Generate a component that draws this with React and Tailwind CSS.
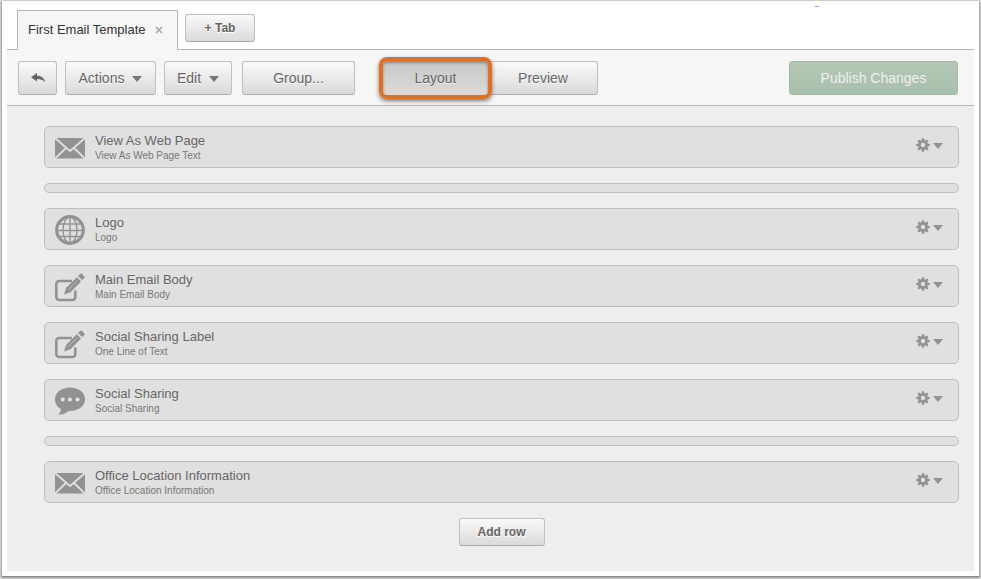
import React from "react";

const rows = [
  { icon: "mail", title: "View As Web Page", detail: "View As Web Page Text" },
  { spacer: true },
  { icon: "globe", title: "Logo", detail: "Logo" },
  { icon: "edit", title: "Main Email Body", detail: "Main Email Body" },
  { icon: "edit", title: "Social Sharing Label", detail: "One Line of Text" },
  { icon: "chat", title: "Social Sharing", detail: "Social Sharing" },
  { spacer: true },
  { icon: "mail", title: "Office Location Information", detail: "Office Location Information" },
];

const raised =
  "rounded-[3px] border border-[#bfbfbf] border-b-[#acacac] bg-linear-to-b from-[#fafafa] to-[#dadada] text-[#666] text-shadow-[0_1px_0_#fff]";

function Caret({ className }) {
  return (
    <svg className={className} viewBox="0 0 10 6" width="10" height="6" fill="currentColor" aria-hidden="true">
      <path d="M0 0h10L5 6z" />
    </svg>
  );
}

function RowIcon({ name }) {
  return (
    <svg className="size-[30px] shrink-0 text-[#929292]" viewBox="0 0 30 30" fill="currentColor" aria-hidden="true">
      {name === "mail" && (
        <>
          <path d="M0 5h30v20.500H0z" />
          <path d="M0 5l15 13L30 5M0 25.500l11-10.500M30 25.500L19 15" fill="none" stroke="#e0e0e0" strokeWidth="1.800" />
        </>
      )}
      {name === "globe" && (
        <g fill="none" stroke="currentColor">
          <circle cx="15" cy="15" r="13.300" strokeWidth="3.200" />
          <path d="M15 2v26M2 15.500h26M4.500 9h21M4.500 21.500h21" strokeWidth="1.400" />
          <ellipse cx="15" cy="15" rx="7" ry="13" strokeWidth="1.400" />
        </g>
      )}
      {name === "edit" && (
        <>
          <path
            d="M17 9H4.300a3 3 0 0 0-3 3v13a3 3 0 0 0 3 3h13a3 3 0 0 0 3-3v-6.500"
            fill="none"
            stroke="currentColor"
            strokeWidth="2.600"
          />
          <path d="M9 22.500l2.200-6.800L21.800 5.200l4.300 4.300L15.500 20.200z" />
          <path d="M23 4L25.400 1.800q.8-.6 1.400 0l2.600 2.600q.6.700 0 1.400L27.300 8.200z" />
          <path d="M13.500 17.300L22 8.900" stroke="#d0d0d0" strokeWidth=".7" />
        </>
      )}
      {name === "chat" && (
        <>
          <path d="M15 1.500c8.300 0 15 5 15 11.700S23.300 25 15 25h-1.500C11 27.500 7.500 28.700 3 28.600c1.800-1.300 2.800-3 3-5.500C2.300 21 0 17.500 0 13.200 0 6.500 6.700 1.500 15 1.500z" />
          <g fill="#e4e4e4">
            <circle cx="7.700" cy="13.500" r="2" />
            <circle cx="15" cy="13.500" r="2" />
            <circle cx="22.500" cy="13.500" r="2" />
          </g>
        </>
      )}
    </svg>
  );
}

function Gear() {
  return (
    <svg viewBox="-7 -7 14 14" width="14" height="14" fill="currentColor" aria-hidden="true">
      <path
        fillRule="evenodd"
        d="M-4.900 0a4.900 4.900 0 1 0 9.800 0a4.900 4.900 0 1 0-9.800 0zM-2.200 0a2.200 2.200 0 1 1 4.400 0a2.200 2.200 0 1 1-4.400 0z"
      />
      {[0, 45, 90, 135, 180, 225, 270, 315].map((angle) => (
        <path key={angle} d="M-1.400-4.300L-1.100-6.800H1.100L1.400-4.300z" transform={`rotate(${angle})`} />
      ))}
    </svg>
  );
}

function Row({ icon, title, detail }) {
  return (
    <li className="flex h-[42px] items-start rounded-[5px] border border-[#bfbfbf] bg-[#e0e0e0] pt-1.5 pr-[15px] pl-2.5">
      <RowIcon name={icon} />
      <div className="ml-2.5 min-w-0 flex-1 text-[#666]">
        <div className="truncate text-[13px] leading-4">{title}</div>
        <div className="truncate text-[10px] leading-[14px] text-[#777]">{detail}</div>
      </div>
      <button type="button" aria-label={`${title} options`} className="mt-[5px] flex items-center gap-[3px] text-[#929292]">
        <Gear />
        <Caret className="mt-0.5" />
      </button>
    </li>
  );
}

export default function App() {
  return (
    <div className="flex min-h-screen bg-[#ededed] px-0.5 pt-px pb-[3px] font-['Liberation_Sans',Arial,sans-serif]">
      <div className="relative flex flex-1 flex-col bg-white px-[5px] pt-[9px] pb-[5px] shadow-[0_1px_2px_1px_#888]">
        <span className="absolute top-[5px] right-[160px] h-px w-1 bg-[#8c96f0]" />
        <header className="flex items-start border-b border-[#b5b5b5] pl-2.5">
          <div className="-mb-px flex h-10 w-[161px] items-center justify-between border border-b-0 border-[#b5b5b5] bg-[#f6f6f6] pr-3.5 pb-0.5 pl-2.5 text-[13px] text-[#333]">
            <span>First Email Template</span>
            <button type="button" aria-label="Close tab" className="text-[#aaa]">
              <svg width="8" height="8" viewBox="0 0 8 8" stroke="currentColor" strokeWidth="1.600" aria-hidden="true">
                <path d="M1 1l6 6M7 1L1 7" />
              </svg>
            </button>
          </div>
          <button type="button" className={`${raised} mt-1 ml-[7px] h-7 w-[70px] text-xs font-bold`}>
            + Tab
          </button>
        </header>

        <div className="flex h-14 items-center border-b border-[#b5b5b5] bg-[#f6f6f6] pr-4 pl-[11px] text-sm">
          <button type="button" aria-label="Back" className={`${raised} flex h-[34px] w-[39px] items-center justify-center`}>
            <svg width="14" height="10" viewBox="0 0 14 10" fill="currentColor" aria-hidden="true">
              <path d="M0 4.200L6 0v2.700c4.500 0 7.300 2.300 8 6.300C12 6.700 9.500 5.900 6 5.900v2.600z" />
            </svg>
          </button>
          <button type="button" className={`${raised} ml-2 flex h-[34px] w-[91px] items-center justify-center gap-2`}>
            Actions
            <Caret className="mt-0.5 text-[#777]" />
          </button>
          <button type="button" className={`${raised} ml-2 flex h-[34px] w-[68px] items-center justify-center gap-2`}>
            Edit
            <Caret className="mt-0.5 text-[#777]" />
          </button>
          <button type="button" className={`${raised} ml-2.5 h-[34px] w-[113px]`}>
            Group...
          </button>
          <div className="ml-6 flex items-center">
            <button
              type="button"
              aria-pressed="true"
              className="relative z-10 h-[42px] w-[113px] rounded-[8px] border-4 border-[#e36f1e] bg-linear-to-b from-[#c9c9c9] to-[#dadada] text-[#666] shadow-[0_2px_4px_#777,inset_0_2px_3px_#888] text-shadow-[0_1px_0_#eee]"
            >
              Layout
            </button>
            <button type="button" aria-pressed="false" className={`${raised} -ml-1 h-[34px] w-[110px]`}>
              Preview
            </button>
          </div>
          <button
            type="button"
            disabled
            className="ml-auto h-[34px] w-[169px] rounded-[3px] border border-[#a4b8a6] bg-linear-to-b from-[#b4c6b5] to-[#a8c0ab] text-[#f0f0f0]"
          >
            Publish Changes
          </button>
        </div>

        <main className="flex flex-1 flex-col items-center bg-[#eee] pt-5 pr-[15px] pb-5 pl-[37px]">
          <ul className="flex w-full flex-col gap-[15px]">
            {rows.map((row, index) =>
              row.spacer ? (
                <li key={index} className="h-2.5 rounded-[5px] border border-[#bfbfbf] bg-[#e0e0e0]" />
              ) : (
                <Row key={index} {...row} />
              ),
            )}
          </ul>
          <button type="button" className={`${raised} mt-[15px] h-7 w-[86px] text-xs font-bold`}>
            Add row
          </button>
        </main>
      </div>
    </div>
  );
}
